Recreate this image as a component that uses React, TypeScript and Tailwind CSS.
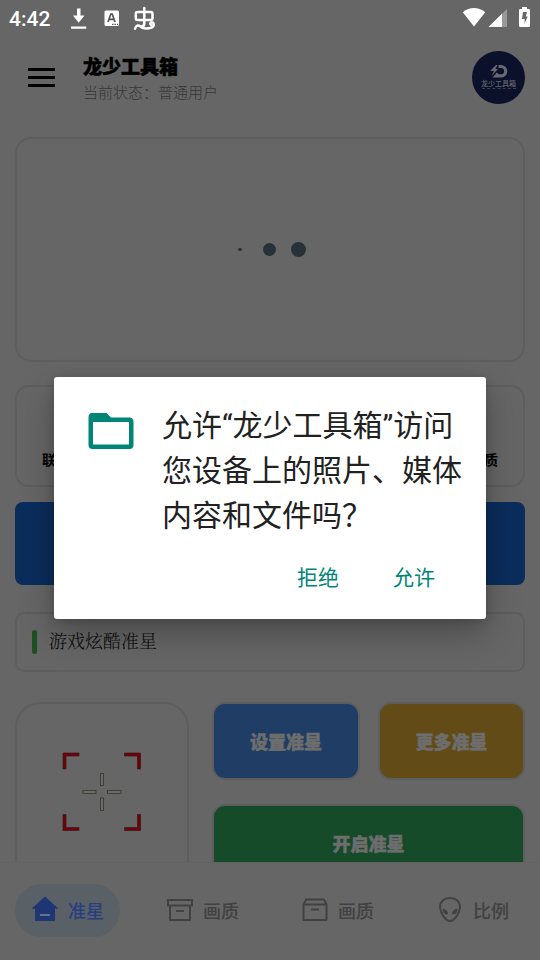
import type { ReactNode } from "react";

function StatusBar() {
  return (
    <div className="flex h-[37px] shrink-0 items-center text-white">
      <span className="ml-[9px] w-[60px] pt-[2px] text-[21px] leading-[37px] font-medium">4:42</span>
      <svg className="block h-[37px] w-[100px]" viewBox="69 0 100 37" fill="none">
        <path d="M77 8.500h3.500v7h4L78.700 22.800 73 15.500h4zM71 26.500h15.200v2.200H71z" fill="#fff" />
        <rect x="104.500" y="10.500" width="14.500" height="15.500" rx="1.500" fill="#fff" />
        <path d="M108 22l2.800-8h1.400l2.800 8M109 19.300h5" stroke="#555" strokeWidth="1.700" />
        <path d="M112 24.300h1.500M114.500 24.300h1.500M117 24.300h1" stroke="#555" strokeWidth="1.200" />
        <path
          d="M137.500 12h13.300q1.700 0 1.700 1.700v4.600q0 1.700-1.700 1.700h-13.300q-1.700 0-1.700-1.700v-4.600q0-1.700 1.700-1.700zM144.300 8v15.500q0 3-3 3M135 28.800q1-4 4.500-3 3 2.800 6.500 2.800c4 0 8-1 7.700-4.300q-.4-2.500-2.400-2-1.800 1-.3 2.500"
          stroke="#fff"
          strokeWidth="2.500"
          strokeLinecap="round"
          strokeLinejoin="round"
        />
      </svg>
      <svg className="ml-auto block h-[37px] w-[80px]" viewBox="460 0 80 37">
        <path d="M474 26.500L462.800 12.200q11.200-8.400 22.400 0z" fill="#fff" />
        <path d="M507 9v18h-18.500z" fill="#999" />
        <path d="M502 13.800V27h-13.500z" fill="#fff" />
        <path d="M522 7h5v2h1.700q1.300 0 1.300 1.300v15.400q0 1.300-1.300 1.300h-8.400q-1.300 0-1.300-1.300V10.300q0-1.300 1.300-1.300h1.700z" fill="#fff" />
        <path d="M523 12h4l-1.300 4.500h2L524.300 24l.5-5H522z" fill="#666" />
      </svg>
    </div>
  );
}

function Header() {
  return (
    <header className="flex h-[100px] shrink-0 items-start">
      <div className="mt-[31px] ml-[28px] flex w-[27px] flex-col gap-[5px]">
        <span className="h-[3px] bg-black" />
        <span className="h-[3px] bg-black" />
        <span className="h-[3px] bg-black" />
      </div>
      <div className="mt-[18px] ml-[28px]">
        <h1 className="text-[19px] leading-[25px] font-black text-black [-webkit-text-stroke:0.5px_black]">龙少工具箱</h1>
        <p className="mt-[1px] text-[15px] leading-[25px] font-light text-[#363636]">当前状态：普通用户</p>
      </div>
      <div className="mt-[14px] mr-[15px] ml-auto flex size-[53px] flex-col items-center rounded-full bg-[#0b112b] text-[#66696f]">
        <svg className="mt-[13px] block h-[15px] w-[18px]" viewBox="0 0 18 15">
          <path d="M6 1L0 7h4l-2.500 5L8 5H5.500L7.500 1z" fill="currentColor" />
          <path d="M8.500 2.500H11a4.700 4.700 0 010 9.400H6l2-2.500" fill="none" stroke="currentColor" strokeWidth="3.200" />
        </svg>
        <span className="mt-[1px] text-[7px] leading-[8px] font-medium whitespace-nowrap">龙少工具箱</span>
        <span className="w-[34px] border-t border-dashed border-[#3f4353]" />
      </div>
    </header>
  );
}

function Action({ className, children }: { className: string; children: ReactNode }) {
  return (
    <div className={"flex items-center justify-center rounded-[13px] border-2 border-[#5e5e5e] pt-[2px] text-[18px] font-black text-[#6d6d6d] [-webkit-text-stroke:0.5px_#6d6d6d] " + className}>
      {children}
    </div>
  );
}

function Crosshair() {
  return (
    <svg className="mt-[47px] ml-[44px] block size-[82px]" viewBox="61 751 82 82" fill="none">
      <g fill="#740006" stroke="#321b1c" strokeWidth="0.700">
        <path d="M63 753h16v3H66v13h-3z" />
        <path d="M140.500 753h-16v3h13v13h3z" />
        <path d="M63 830.500h16v-3H66v-13h-3z" />
        <path d="M140.500 830.500h-16v-3h13v-13h3z" />
      </g>
      <g stroke="#353530" fill="#6c6c66" strokeWidth="0.800">
        <rect x="100.500" y="773.500" width="3" height="12" />
        <rect x="100.500" y="798" width="3" height="12.500" />
        <rect x="83" y="790.500" width="13" height="3" />
        <rect x="107.500" y="790.500" width="13.500" height="3" />
      </g>
    </svg>
  );
}

function NavItem({ label, active = false, children }: { label: string; active?: boolean; children: ReactNode }) {
  return (
    <div className="flex w-[135px] justify-center">
      <div
        className={
          "flex h-[53px] w-[105px] items-center rounded-full pl-[15px] text-[18px] font-medium " +
          (active ? "bg-[#596166] text-[#273f80]" : "text-[#414141]")
        }
      >
        <svg className="mr-[8px] mb-[3px] block size-[30px] shrink-0" viewBox="0 0 30 30" fill="none">
          {children}
        </svg>
        <span className="pt-[1px]">{label}</span>
      </div>
    </div>
  );
}

function PermissionDialog() {
  return (
    <div className="absolute top-[377px] left-[54px] flex h-[242px] w-[432px] flex-col rounded-[3px] bg-white shadow-[0_14px_34px_rgba(0,0,0,0.28),0_2px_10px_rgba(0,0,0,0.14)]">
      <div className="flex pt-[26px]">
        <svg className="mt-[10px] ml-[34px] block h-[36px] w-[46px] shrink-0" viewBox="0 0 46 36">
          <path
            fillRule="evenodd"
            clipRule="evenodd"
            fill="#008577"
            d="M4 0h14.500L23 4.500h18.500Q45.500 4.500 45.500 9v22.500q0 4.500-4 4.500h-37Q.5 36 .5 31.500v-27Q.5 0 4 0zM5 9v22.500h36V9z"
          />
        </svg>
        <p className="ml-[28px] text-[30px] leading-[45px] whitespace-nowrap text-[#212121]">
          允许“龙少工具箱”访问
          <br />
          您设备上的照片、媒体
          <br />
          内容和文件吗？
        </p>
      </div>
      <div className="mt-[22px] flex justify-end pr-[51px] text-[21px] leading-[36px] text-[#008577]">
        <button className="mr-[54px]">拒绝</button>
        <button>允许</button>
      </div>
    </div>
  );
}

export default function App() {
  return (
    <div className="relative flex h-[960px] w-[540px] flex-col overflow-hidden bg-[#666666] font-[Roboto,'Noto_Sans_CJK_SC',sans-serif]">
      <StatusBar />
      <Header />
      <main className="flex h-[725px] shrink-0 flex-col overflow-hidden px-[15px]">
        <section className="flex h-[225px] shrink-0 items-center rounded-[16px] border-2 border-[#5e5e5e]">
          <span className="ml-[221px] h-[3px] w-[4px] rounded-full bg-[#263238]" />
          <span className="ml-[21px] size-[13px] rounded-full bg-[#263238]" />
          <span className="ml-[15px] size-[15px] rounded-full bg-[#263238]" />
        </section>
        <section className="mt-[23px] flex h-[102px] shrink-0 justify-between rounded-[14px] border-2 border-[#5e5e5e] px-[25px] pt-[62px] text-[14px] leading-[22px] font-bold text-black">
          <span>联</span>
          <span>质</span>
        </section>
        <section className="mt-[15px] h-[83px] shrink-0 rounded-[8px] bg-[#0b2d5c]" />
        <section className="mt-[27px] flex h-[60px] shrink-0 items-center rounded-[9px] border-2 border-[#5e5e5e] pl-[15px]">
          <span className="h-[24px] w-[5px] rounded-full bg-[#1e5021]" />
          <span className="mb-[3px] ml-[12px] font-['Noto_Serif_CJK_SC','Noto_Sans_CJK_SC',serif] text-[18px] font-light text-[#080808]">游戏炫酷准星</span>
        </section>
        <section className="mt-[30px] flex shrink-0">
          <div className="h-[190px] w-[174px] rounded-[25px] border-2 border-[#5e5e5e]">
            <Crosshair />
          </div>
          <div className="ml-[23px] flex flex-col">
            <div className="flex gap-[18px]">
              <Action className="h-[78px] w-[148px] bg-[#203e65]">设置准星</Action>
              <Action className="h-[78px] w-[147px] bg-[#624b16]">更多准星</Action>
            </div>
            <Action className="mt-[24px] h-[78px] w-[313px] bg-[#164b2a]">开启准星</Action>
          </div>
        </section>
      </main>
      <nav className="flex h-[98px] shrink-0 items-center border-t border-[#636363] pb-[2px]">
        <NavItem label="准星" active>
          <path d="M15 2.500L28.500 14.700H25V27H5V14.700H1.500z" fill="#1f3675" />
          <path d="M10 21h10" stroke="#657684" strokeWidth="2" />
        </NavItem>
        <NavItem label="画质">
          <path d="M3 6h24v5.500H3zM5 11.500V26h20V11.500M11 17h8" stroke="currentColor" strokeWidth="2" />
        </NavItem>
        <NavItem label="画质">
          <path d="M3.500 10.500l2.500-5h18l2.500 5V26h-23zM3.500 10.500h23M11 15.500h8" stroke="currentColor" strokeWidth="2" strokeLinejoin="round" />
        </NavItem>
        <NavItem label="比例">
          <path d="M15 4C9 4 5 7.500 5 13c0 6.500 6 14 10 14s10-7.500 10-14c0-5.500-4-9-10-9z" stroke="currentColor" strokeWidth="1.900" />
          <path d="M8 15.500q4 0 4.500 4.500-4.500 0-4.500-4.500zM22 15.500q-4 0-4.500 4.500 4.500 0 4.500-4.500z" fill="currentColor" stroke="currentColor" />
        </NavItem>
      </nav>
      <PermissionDialog />
    </div>
  );
}
